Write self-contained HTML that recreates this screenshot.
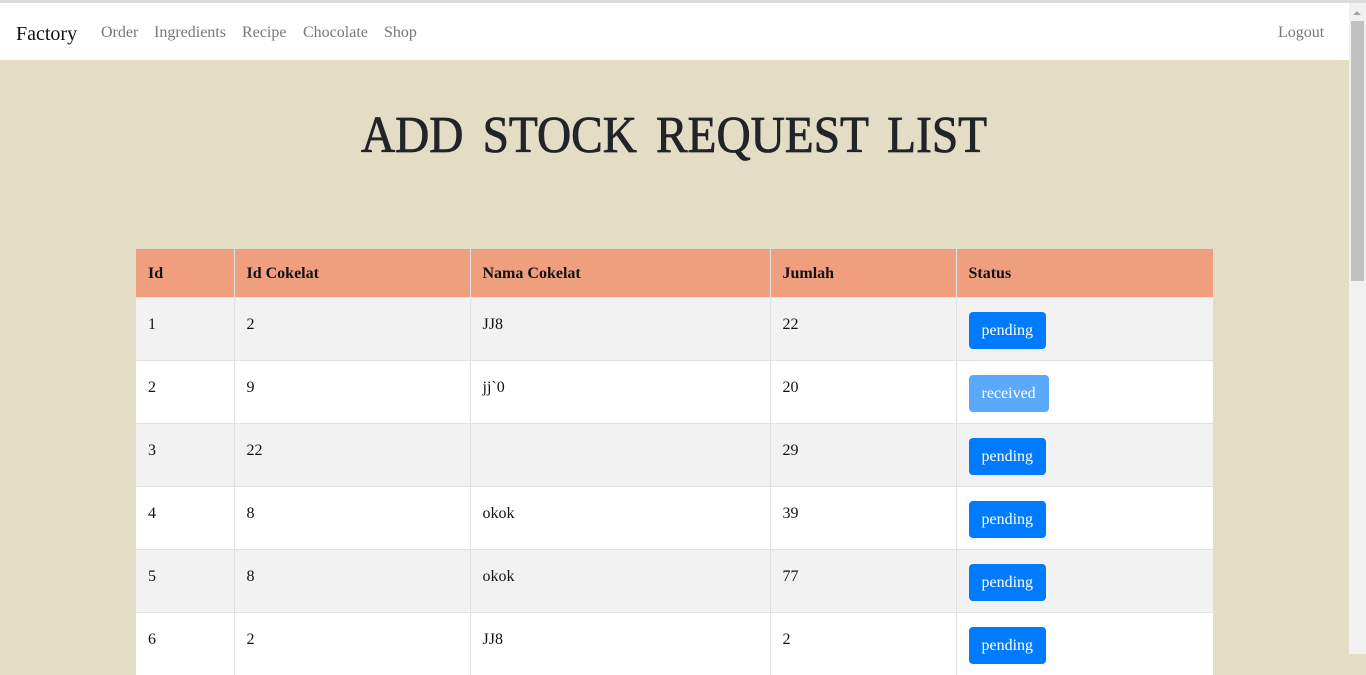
<!DOCTYPE html>
<html><head><meta charset="utf-8"><style>
*{box-sizing:border-box;margin:0;padding:0}
html,body{width:1366px;height:654px;overflow:hidden;background:#e4ddc6;font-family:"Liberation Serif",serif}
.topline{position:absolute;left:0;top:0;width:1366px;height:3px;background:#dcdcdc}
.nav{position:absolute;left:0;top:3px;width:1349px;height:57px;background:#fff}
.nav .brand{position:absolute;left:16px;top:20px;font-size:20px;color:#111}
.nav a{position:absolute;top:21px;font-size:16px;color:#777;text-decoration:none}
.title{position:absolute;left:0;width:1349px;top:103px;text-align:center;color:#212529}
.title span{display:inline-block;font-size:52px;transform:scaleX(0.91);letter-spacing:0px;word-spacing:8px;line-height:66px;white-space:nowrap;-webkit-text-stroke:0.8px #212529}
table{position:absolute;left:136px;top:249px;width:1077px;border-collapse:collapse;font-size:16px;color:#111}
th{background:#f09f7e;height:48px;text-align:left;padding:2px 12px 0;font-weight:bold;border-left:1px solid #dee2e6;border-bottom:1px solid #dee2e6}
td{height:63px;vertical-align:top;padding:18px 12px 0;border-left:1px solid #dee2e6;border-top:1px solid #dee2e6}
th:first-child,td:first-child{border-left:none}
tr.o td{background:#f2f2f2}
tr.e td{background:#fff}
td.s{padding-top:14px}
.b{display:inline-block;height:37px;line-height:37px;padding:0 13px;border-radius:4px;background:#007bff;color:#fff;font-size:16px}
.b.r{background:#5ba9fd}
.sb{position:absolute;left:1349px;top:3px;width:17px;height:651px;background:#f1f1f1}
.thumb{position:absolute;left:1351px;top:21px;width:13px;height:260px;background:#c1c1c1}
.arrow{position:absolute;left:1353px;top:11px;width:0;height:0;border-left:4px solid transparent;border-right:4px solid transparent;border-bottom:4px solid #a3a3a3}
</style></head><body>
<div class="topline"></div>
<div class="nav">
<div class="brand">Factory</div>
<a style="left:101px">Order</a>
<a style="left:154px">Ingredients</a>
<a style="left:242px">Recipe</a>
<a style="left:303px">Chocolate</a>
<a style="left:384px">Shop</a>
<a style="left:1278px">Logout</a>
</div>
<div class="title"><span>ADD STOCK REQUEST LIST</span></div>
<table>
<colgroup><col style="width:98px"><col style="width:236px"><col style="width:300px"><col style="width:186px"><col style="width:257px"></colgroup>
<tr><th>Id</th><th>Id Cokelat</th><th>Nama Cokelat</th><th>Jumlah</th><th>Status</th></tr>
<tr class="o"><td>1</td><td>2</td><td>JJ8</td><td>22</td><td class="s"><span class="b">pending</span></td></tr>
<tr class="e"><td>2</td><td>9</td><td>jj`0</td><td>20</td><td class="s"><span class="b r">received</span></td></tr>
<tr class="o"><td>3</td><td>22</td><td></td><td>29</td><td class="s"><span class="b">pending</span></td></tr>
<tr class="e"><td>4</td><td>8</td><td>okok</td><td>39</td><td class="s"><span class="b">pending</span></td></tr>
<tr class="o"><td>5</td><td>8</td><td>okok</td><td>77</td><td class="s"><span class="b">pending</span></td></tr>
<tr class="e"><td>6</td><td>2</td><td>JJ8</td><td>2</td><td class="s"><span class="b">pending</span></td></tr>
</table>
<div class="sb"></div><div class="thumb"></div><div class="arrow"></div>
</body></html>
